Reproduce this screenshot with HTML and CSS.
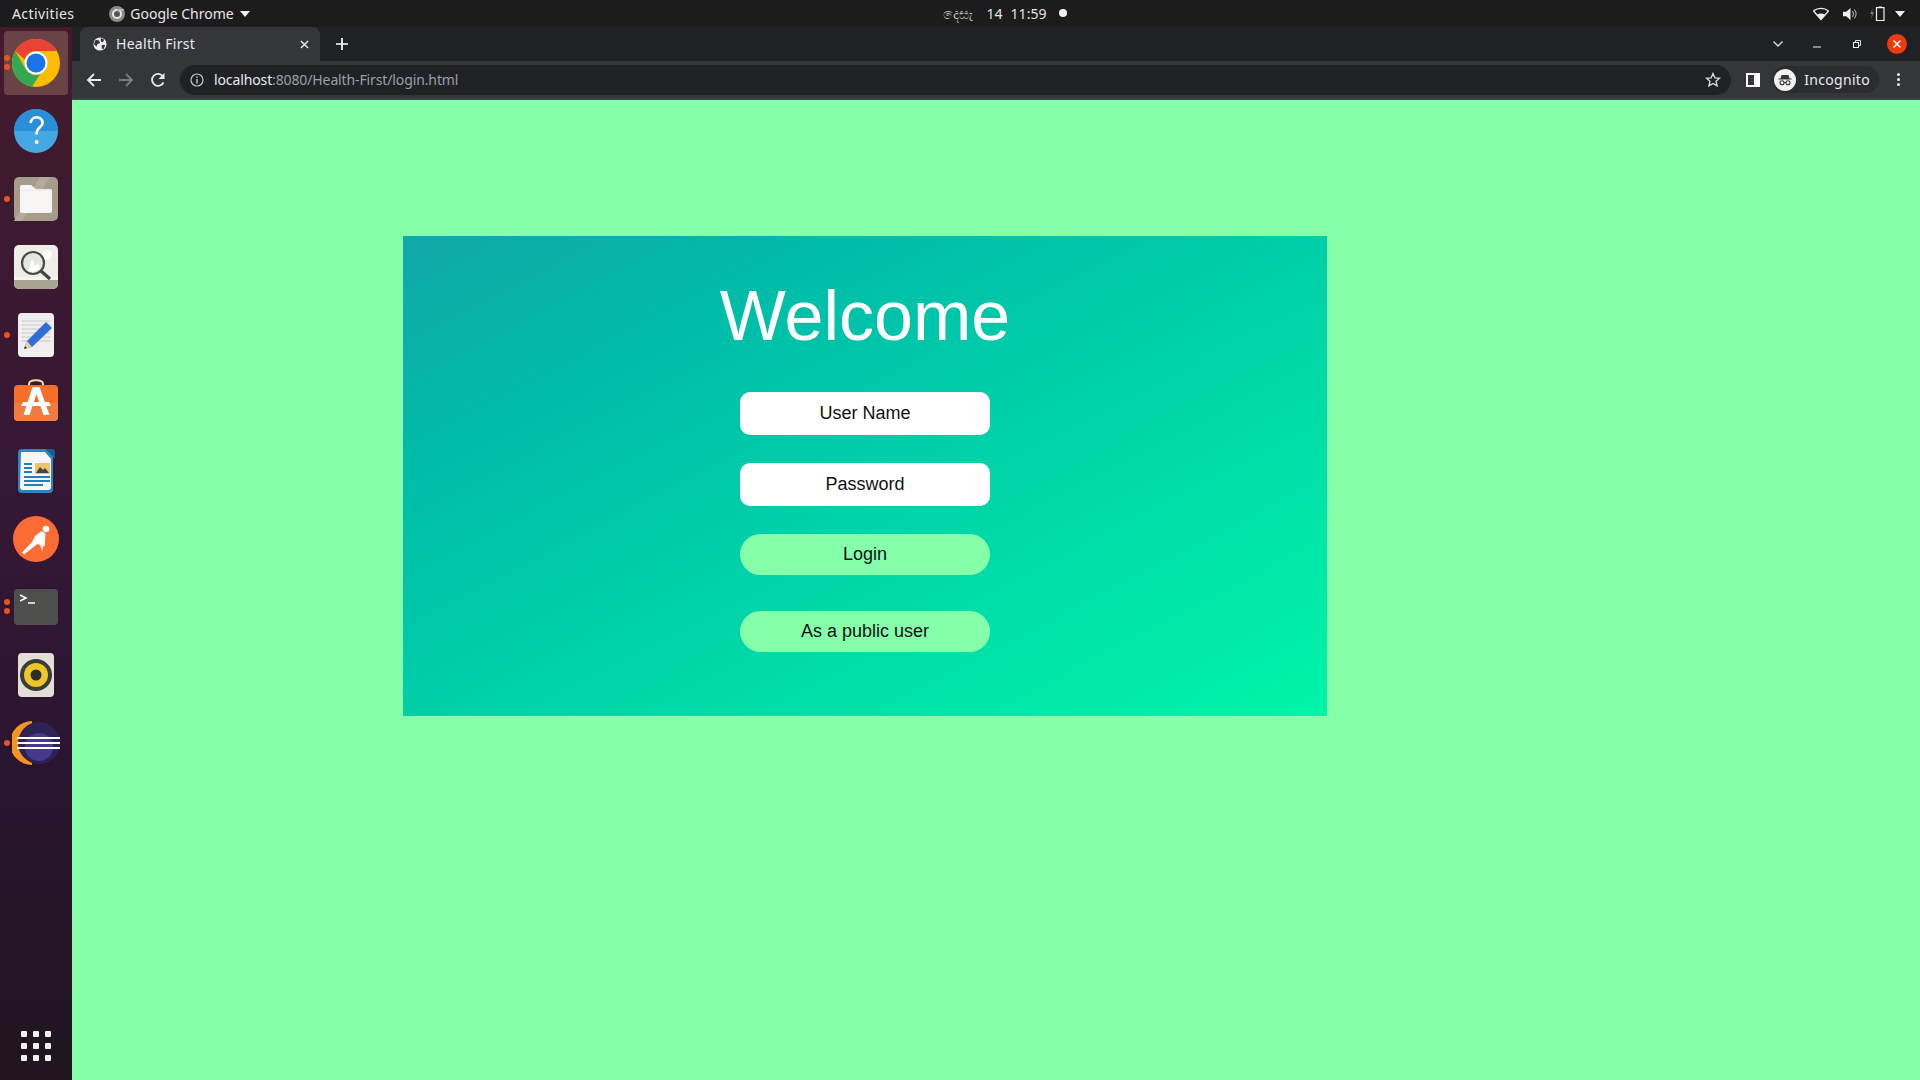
FILE: index.html
```html
<!DOCTYPE html>
<html lang="en">
<head>
<meta charset="utf-8">
<title>Health First</title>
<link rel="stylesheet" href="styles.css">
</head>
<body>
<header class="topbar">
  <div class="top-left">
    <span class="activities">Activities</span>
    <span class="appmenu">
      <svg class="appicon" viewBox="0 0 16 16"><circle cx="8" cy="8" r="8" fill="#8a8a8a"/><circle cx="8" cy="8" r="5" fill="#e8e8e8"/><circle cx="8" cy="8" r="3" fill="#555"/><path d="M8 3h7l-1 2H8z" fill="#bbb"/></svg>
      <span>Google Chrome</span>
      <svg class="caret" viewBox="0 0 10 6"><path d="M0 0h10L5 6z" fill="#eee"/></svg>
    </span>
  </div>
  <div class="clock">
    <span class="month">දෙසැ</span><span class="day">14</span><span>11:59</span><i class="rec"></i>
  </div>
  <div class="top-right">
    <svg class="sys wifi" viewBox="0 0 16 12"><path d="M8 11.500L.5 3C4.500-.4 11.500-.4 15.500 3z" fill="none" stroke="#eee" stroke-width="1.300"/><path d="M8 11.500L4 6.500c2.400-1.500 5.600-1.500 8 0z" fill="#eee"/></svg>
    <svg class="sys vol" viewBox="0 0 16 14"><path d="M0 4.500h3.500L8 .5v13l-4.500-4H0z" fill="#eee"/><path d="M10 4c1.300 1.700 1.300 4.300 0 6M12 2.200c2.300 2.800 2.300 6.800 0 9.600" fill="none" stroke="#aaa" stroke-width="1.200"/></svg>
    <svg class="batt" viewBox="0 0 15 15"><path d="M3 2L0 8h2l-1 5 3-7H2z" fill="#777"/><path d="M6.500 1.700h7.500v12.800H6.500z" fill="none" stroke="#eee" stroke-width="1.200"/><path d="M8.500 .5h3.500v1.500H8.500z" fill="#eee"/></svg>
    <svg class="caret" viewBox="0 0 10 6"><path d="M0 0h10L5 6z" fill="#eee"/></svg>
  </div>
</header>

<div class="desktop">
  <nav class="dock">
    <div class="dock-item active">
      <i class="pip p1"></i><i class="pip p2"></i>
      <svg viewBox="0 0 48 48"><circle cx="24" cy="24" r="24" fill="#fbbc04"/><path d="M24 0a24 24 0 0 1 20.800 12H24a12 12 0 0 0-11.400 8.300L3.200 12A24 24 0 0 1 24 0z" fill="#ea4335"/><path d="M3.200 12l10.400 18A12 12 0 0 0 28 35.300L20 47.700A24 24 0 0 1 3.200 12z" fill="#34a853"/><circle cx="24" cy="24" r="11.500" fill="#fff"/><circle cx="24" cy="24" r="9.500" fill="#1a73e8"/></svg>
    </div>
    <div class="dock-item">
      <svg viewBox="0 0 44 44"><circle cx="22" cy="22" r="22" fill="#45a8e4"/><path d="M0 22a22 22 0 0 1 44 0z" fill="#2a8fd8"/><path d="M16.500 14c.8-4 3.600-6 6.500-5.700 3.800.4 6 3 5.500 6.200-.5 3.200-5.800 4.500-5.800 9.500v1.500" fill="none" stroke="#fff" stroke-width="2.600"/><circle cx="22.700" cy="33" r="2" fill="#fff"/></svg>
    </div>
    <div class="dock-item">
      <i class="pip p0"></i>
      <svg viewBox="0 0 44 44"><rect width="44" height="44" rx="5" fill="#a59c8c"/><path d="M26 0h10L8 44H0z" fill="#b3ab9c"/><path d="M6 10a2 2 0 0 1 2-2h9l5 4h14a2 2 0 0 1 2 2v20a2 2 0 0 1-2 2H8a2 2 0 0 1-2-2z" fill="#f7f6f4"/><path d="M6 13h32" stroke="#e6e4e0" stroke-width="1"/></svg>
    </div>
    <div class="dock-item">
      <svg viewBox="0 0 44 44"><rect width="44" height="44" rx="5" fill="#eeede8"/><path d="M0 32h44v7a5 5 0 0 1-5 5H5a5 5 0 0 1-5-5z" fill="#a8a494"/><path d="M0 32h44v3H0z" fill="#f6f5f0"/><circle cx="33" cy="10" r="5" fill="#fff"/><circle cx="19" cy="18" r="11" fill="#e4e6e6" stroke="#4a4a4a" stroke-width="2.200"/><path d="M14 26l4-12 3 7 3-3 2 5a11 11 0 0 1-12 3z" fill="#fff"/><path d="M27 26l9 8" stroke="#444" stroke-width="3.200"/></svg>
    </div>
    <div class="dock-item">
      <i class="pip p0"></i>
      <svg viewBox="0 0 44 44"><rect x="4" y="0" width="36" height="44" rx="4" fill="#efeff0"/><path d="M8 8h28M8 12h28M8 16h28M8 20h28M8 24h28M8 28h28" stroke="#c8c8cc" stroke-width="1"/><path d="M32 9l6 6-20 19-8 2 3-8z" fill="#2f6ed8"/><path d="M13 28l-3 8 8-2z" fill="#e8cfa8"/><path d="M11 33l-1 3 3-1z" fill="#333"/></svg>
    </div>
    <div class="dock-item store">
      <svg viewBox="0 0 44 48"><path d="M15 12V5c0-5 14-5 14 0v7" fill="none" stroke="#f5d9a8" stroke-width="2"/><rect y="6" width="44" height="36" rx="4" fill="#f56f2a"/><path d="M0 24h44v14a4 4 0 0 1-4 4H4a4 4 0 0 1-4-4z" fill="#ef7c40"/><path d="M18.500 8h7l10 28h-6l-7-21-7 21H9.500z" fill="#fff"/><path d="M9 23h26l2 4H7z" fill="#fff"/></svg>
    </div>
    <div class="dock-item">
      <svg viewBox="0 0 44 44"><g transform="translate(1 0)"><path d="M7 0h24l7 7v33a4 4 0 0 1-4 4H7a4 4 0 0 1-4-4V4a4 4 0 0 1 4-4z" fill="#2a87c0"/><path d="M6 3h24l6 7v28a3 3 0 0 1-3 3H8a3 3 0 0 1-3-3z" fill="#f6f6f6"/><path d="M31 0h6a3 3 0 0 1 3 3v7z" fill="#14608e"/><path d="M9 15h8M9 19h8M9 23h8M9 28h26M9 32h26M9 36h19" stroke="#1f80bd" stroke-width="2"/><rect x="20" y="14" width="15" height="11" fill="#e9c46a"/><path d="M21 24l4-6 3 3 2-2 4 5z" fill="#444"/></g></svg>
    </div>
    <div class="dock-item">
      <svg viewBox="0 0 46 46"><circle cx="23" cy="23" r="23" fill="#fb6c35"/><circle cx="33" cy="13" r="3.300" fill="#fff"/><path d="M28.500 15l4 2.500-1 13-7-2.500L11 38.500 9 36.500l10-10.500 3-6z" fill="#fff"/><path d="M27 29l3 1.500-.5 5z" fill="#fff"/></svg>
    </div>
    <div class="dock-item">
      <i class="pip p1b"></i><i class="pip p2b"></i>
      <svg viewBox="0 0 44 36"><rect width="44" height="36" rx="4" fill="#4e4e4c"/><path d="M6 6l6 3-6 3" fill="none" stroke="#fff" stroke-width="1.500"/><path d="M14 14h7" stroke="#fff" stroke-width="1.500"/></svg>
    </div>
    <div class="dock-item">
      <svg viewBox="0 0 36 44"><rect width="36" height="44" rx="4" fill="#e2dfd6"/><circle cx="18" cy="22" r="16" fill="#3c3c3c"/><circle cx="18" cy="22" r="12" fill="#ecc72a"/><circle cx="18" cy="22" r="5.500" fill="#2c2c2c"/></svg>
    </div>
    <div class="dock-item">
      <i class="pip p0"></i>
      <svg viewBox="0 0 48 44"><path d="M20 0a22 22 0 0 0 0 44z" fill="#f7941e"/><circle cx="27" cy="22" r="21" fill="#2c2255"/><circle cx="27" cy="26" r="14" fill="#473a8c"/><path d="M5 17h43M5 22h43M5 27h43" stroke="#fff" stroke-width="2"/></svg>
    </div>
    <div class="dock-grid">
      <i></i><i></i><i></i><i></i><i></i><i></i><i></i><i></i><i></i>
    </div>
  </nav>

  <div class="browser">
    <div class="tabstrip">
      <div class="tab">
        <svg class="favicon" viewBox="0 0 16 16"><circle cx="8" cy="8" r="7.500" fill="#eee"/><path d="M3 3l4 1 1 3-3 1-1 3-3-3zM9 1l4 2-2 3-2-1zM10 9l4 0-2 5-2-1z" fill="#35363a"/></svg>
        <span class="tab-title">Health First</span>
        <svg class="tab-close" viewBox="0 0 10 10"><path d="M1 1l8 8M9 1l-8 8" stroke="#eee" stroke-width="1.500"/></svg>
      </div>
      <svg class="newtab" viewBox="0 0 12 12"><path d="M6 0v12M0 6h12" stroke="#fff" stroke-width="1.700"/></svg>
      <div class="win-controls">
        <svg class="tabs-down" viewBox="0 0 10 6"><path d="M.5.5L5 5 9.500.5" fill="none" stroke="#ddd" stroke-width="1.300"/></svg>
        <svg class="win-min" viewBox="0 0 8 2"><path d="M0 1h8" stroke="#eee" stroke-width="1"/></svg>
        <svg class="win-max" viewBox="0 0 8 8"><path d="M2.500 2V.5h5v5H6" fill="none" stroke="#ddd"/><rect x=".5" y="2.500" width="5" height="5" fill="none" stroke="#eee"/></svg>
        <span class="win-close"><svg viewBox="0 0 10 10"><path d="M1.500 1.500l7 7M8.500 1.500l-7 7" stroke="#fff" stroke-width="1.500"/></svg></span>
      </div>
    </div>
    <div class="toolbar">
      <svg class="nav" viewBox="0 0 16 16"><path d="M15 8H2M8 2L2 8l6 6" fill="none" stroke="#e8eaed" stroke-width="1.800"/></svg>
      <svg class="nav" viewBox="0 0 16 16"><path d="M1 8h13M8 2l6 6-6 6" fill="none" stroke="#7b7c7f" stroke-width="1.800"/></svg>
      <svg class="nav" viewBox="0 0 16 16"><path d="M13.500 10.500A6 6 0 1 1 13 4.500" fill="none" stroke="#e8eaed" stroke-width="1.800"/><path d="M14.500 1v6h-6z" fill="#e8eaed"/></svg>
      <div class="omnibox">
        <svg class="info" viewBox="0 0 14 14"><circle cx="7" cy="7" r="6" fill="none" stroke="#c4c7c5" stroke-width="1.200"/><path d="M7 6v4.500M7 3.500v1.500" stroke="#c4c7c5" stroke-width="1.400"/></svg>
        <span class="url"><b>localhost</b>:8080/Health-First/login.html</span>
        <svg class="star" viewBox="0 0 16 16"><path d="M8 1.500l1.900 4.300 4.600.4-3.500 3 1.100 4.600L8 11.400l-4.100 2.400L5 9.200l-3.500-3 4.600-.4z" fill="none" stroke="#dcdde0" stroke-width="1.300"/></svg>
      </div>
      <svg class="sidepanel" viewBox="0 0 14 14"><path d="M0 0h14v14H0z" fill="#fff"/><path d="M2 2h6v10H2z" fill="#35363a"/></svg>
      <div class="incognito">
        <span class="inc-badge"><svg viewBox="0 0 16 16"><path d="M4.500 3h7l1 3.500h-9zM1.500 6.500h13v1h-13z" fill="#35363a"/><circle cx="5" cy="10.800" r="2" fill="none" stroke="#35363a" stroke-width="1.100"/><circle cx="11" cy="10.800" r="2" fill="none" stroke="#35363a" stroke-width="1.100"/><path d="M7 10.500h2" stroke="#35363a"/></svg></span>
        <span>Incognito</span>
      </div>
      <div class="kebab"><i></i><i></i><i></i></div>
    </div>
    <main class="page">
      <section class="card">
        <h1 class="title">Welcome</h1>
        <form class="login-form">
          <input class="field" type="text" placeholder="User Name">
          <input class="field field-pass" type="password" placeholder="Password">
          <button class="pill pill-login" type="button">Login</button>
          <button class="pill pill-public" type="button">As a public user</button>
        </form>
      </section>
    </main>
  </div>
</div>
</body>
</html>
```
FILE: styles.css
```css
* { box-sizing: border-box; }
html, body { height: 100%; }
body {
  margin: 0;
  height: 1080px;
  overflow: hidden;
  display: flex;
  flex-direction: column;
  background: #86ffab;
  font-family: "Noto Sans", sans-serif;
}
svg { display: block; }

/* GNOME top bar */
.topbar {
  height: 27px;
  flex: none;
  background: #1c1c1c;
  color: #e6e6e6;
  font-size: 14px;
  display: grid;
  grid-template-columns: 1fr auto 1fr;
  align-items: center;
  padding: 0 15px 0 12px;
}
.top-left { display: flex; align-items: center; gap: 35px; }
.activities { letter-spacing: .4px; }
.appmenu { display: flex; align-items: center; gap: 5px; }
.appicon { width: 16px; height: 16px; }
.caret { width: 10px; height: 6px; flex: none; }
.appmenu .caret { margin-left: 1px; }
.clock {
  display: flex;
  align-items: center;
  font-size: 14px;
  margin-left: 93px;
}
.month { color: #b8b8b8; font-size: 14px; width: 33px; white-space: nowrap; font-family: "Noto Sans", "DejaVu Sans", sans-serif; }
.day { margin: 0 8px 0 11px; }
.rec { width: 8px; height: 8px; border-radius: 50%; background: #f2f2f2; margin: 0 0 2px 13px; }
.top-right { display: flex; align-items: center; justify-content: flex-end; gap: 12px; }
.sys { height: 14px; }
.wifi { width: 16px; }
.vol { width: 15px; margin-left: 2px; }
.batt { width: 15px; height: 15px; }
.batt + .caret { margin-left: -2px; }

/* Dock + browser */
.desktop { flex: 1; display: flex; min-height: 0; }
.dock {
  width: 72px;
  flex: none;
  display: flex;
  flex-direction: column;
  align-items: center;
  gap: 4px;
  padding: 4px 0 19px;
  background: linear-gradient(180deg, #431b2c 0%, #351735 45%, #2a1530 70%, #201520 100%);
}
.dock-item {
  position: relative;
  width: 64px;
  height: 64px;
  flex: none;
  display: flex;
  align-items: center;
  justify-content: center;
  border-radius: 4px;
}
.dock-item svg { width: 44px; height: 44px; }
.dock-item.active { background: #6a4347; }
.dock-item.active svg { width: 48px; height: 48px; }
.dock-item.store svg { width: 44px; height: 48px; }
.dock-item:nth-child(8) svg { width: 46px; height: 46px; }
.dock-item:nth-child(9) svg { width: 44px; height: 36px; }
.dock-item:nth-child(10) svg { width: 36px; height: 44px; }
.dock-item:nth-child(11) svg { width: 48px; height: 44px; }
.pip {
  position: absolute;
  left: 0;
  width: 6px;
  height: 6px;
  border-radius: 50%;
  background: #e9531f;
}
.p0 { top: 29px; }
.p1 { top: 24px; }
.p2 { top: 33px; }
.p1b { top: 24px; }
.p2b { top: 33px; }
.dock-grid {
  margin-top: auto;
  display: grid;
  grid-template-columns: repeat(3, 6px);
  gap: 6px;
}
.dock-grid i { width: 6px; height: 6px; background: #f0f0ee; border-radius: 1px; }

.browser { flex: 1; min-width: 0; display: flex; flex-direction: column; }
.tabstrip {
  height: 34px;
  flex: none;
  background: #202124;
  display: flex;
  align-items: center;
  padding-left: 8px;
}
.tab {
  width: 240px;
  height: 34px;
  background: #35363a;
  border-radius: 8px 8px 0 0;
  display: flex;
  align-items: center;
  padding: 0 11px 0 13px;
  color: #e8eaed;
  font-size: 14px;
}
.favicon { width: 14px; height: 14px; flex: none; }
.tab-title { flex: 1; margin: 0 0 2px 9px; letter-spacing: .3px; }
.tab-close { width: 9px; height: 9px; }
.newtab { width: 12px; height: 12px; margin-left: 16px; }
.win-controls { margin-left: auto; display: flex; align-items: center; padding-right: 13px; }
.tabs-down { width: 10px; height: 6px; }
.win-min { width: 8px; height: 2px; margin-left: 30px; margin-top: 6px; }
.win-max { width: 8px; height: 8px; margin-left: 32px; }
.win-close {
  width: 20px;
  height: 20px;
  border-radius: 50%;
  background: #ee3a0c;
  margin-left: 26px;
  display: flex;
  align-items: center;
  justify-content: center;
}
.win-close svg { width: 10px; height: 10px; }

.toolbar {
  height: 39px;
  flex: none;
  background: #35363a;
  border-bottom: 2px solid #3f4043;
  display: flex;
  align-items: center;
  padding: 0 13px 0 14px;
  color: #e8eaed;
}
.nav { width: 16px; height: 16px; margin-right: 16px; flex: none; }
.nav:nth-child(3) { margin-right: 14px; }
.omnibox {
  flex: 1;
  height: 30px;
  background: #202124;
  border-radius: 15px;
  display: flex;
  align-items: center;
  padding: 0 10px;
  font-size: 14px;
  color: #9aa0a6;
}
.info { width: 14px; height: 14px; flex: none; }
.url { flex: 1; margin-left: 10px; letter-spacing: -.12px; }
.url b { font-weight: 400; color: #e8eaed; }
.star { width: 16px; height: 16px; }
.sidepanel { width: 14px; height: 14px; margin-left: 15px; flex: none; }
.incognito {
  display: flex;
  align-items: center;
  gap: 8px;
  height: 27px;
  margin-left: 12px;
  padding: 0 9px 0 2px;
  border-radius: 14px;
  background: #2b2c2f;
  font-size: 14px;
  letter-spacing: .3px;
}
.inc-badge {
  width: 22px;
  height: 22px;
  border-radius: 50%;
  background: #f1f1f1;
  display: flex;
  align-items: center;
  justify-content: center;
}
.inc-badge svg { width: 16px; height: 16px; }
.kebab { margin-left: 18px; display: flex; flex-direction: column; gap: 2px; width: 3px; margin-right: 7px; }
.kebab i { width: 3px; height: 3px; background: #e8eaed; border-radius: 50%; }

/* Login page */
.page { flex: 1; background: #86ffab; padding: 136px 0 0 331px; min-height: 0; }
.card {
  width: 924px;
  height: 480px;
  background: linear-gradient(to bottom right, #12a8a8, #00bca9 25%, #00f5a8);
  display: flex;
  flex-direction: column;
  align-items: center;
  padding-top: 40px;
  font-family: "Liberation Sans", Arial, sans-serif;
}
.title {
  margin: 0;
  font-size: 70px;
  line-height: 80px;
  font-weight: 400;
  color: #fff;
}
.login-form {
  display: flex;
  flex-direction: column;
  align-items: center;
  margin-top: 36px;
}
.field {
  width: 250px;
  height: 43px;
  border: 0;
  border-radius: 10px;
  background: #fff;
  text-align: center;
  font: 18px "Liberation Sans", Arial, sans-serif;
  color: #000;
  padding: 0;
}
.field::placeholder { color: #111; opacity: 1; }
.field-pass { margin-top: 28px; }
.pill {
  width: 250px;
  height: 41px;
  border: 0;
  border-radius: 21px;
  background: #86ffab;
  font: 18px "Liberation Sans", Arial, sans-serif;
  color: #111;
  padding: 0;
}
.pill-login { margin-top: 28px; }
.pill-public { margin-top: 36px; }
```
